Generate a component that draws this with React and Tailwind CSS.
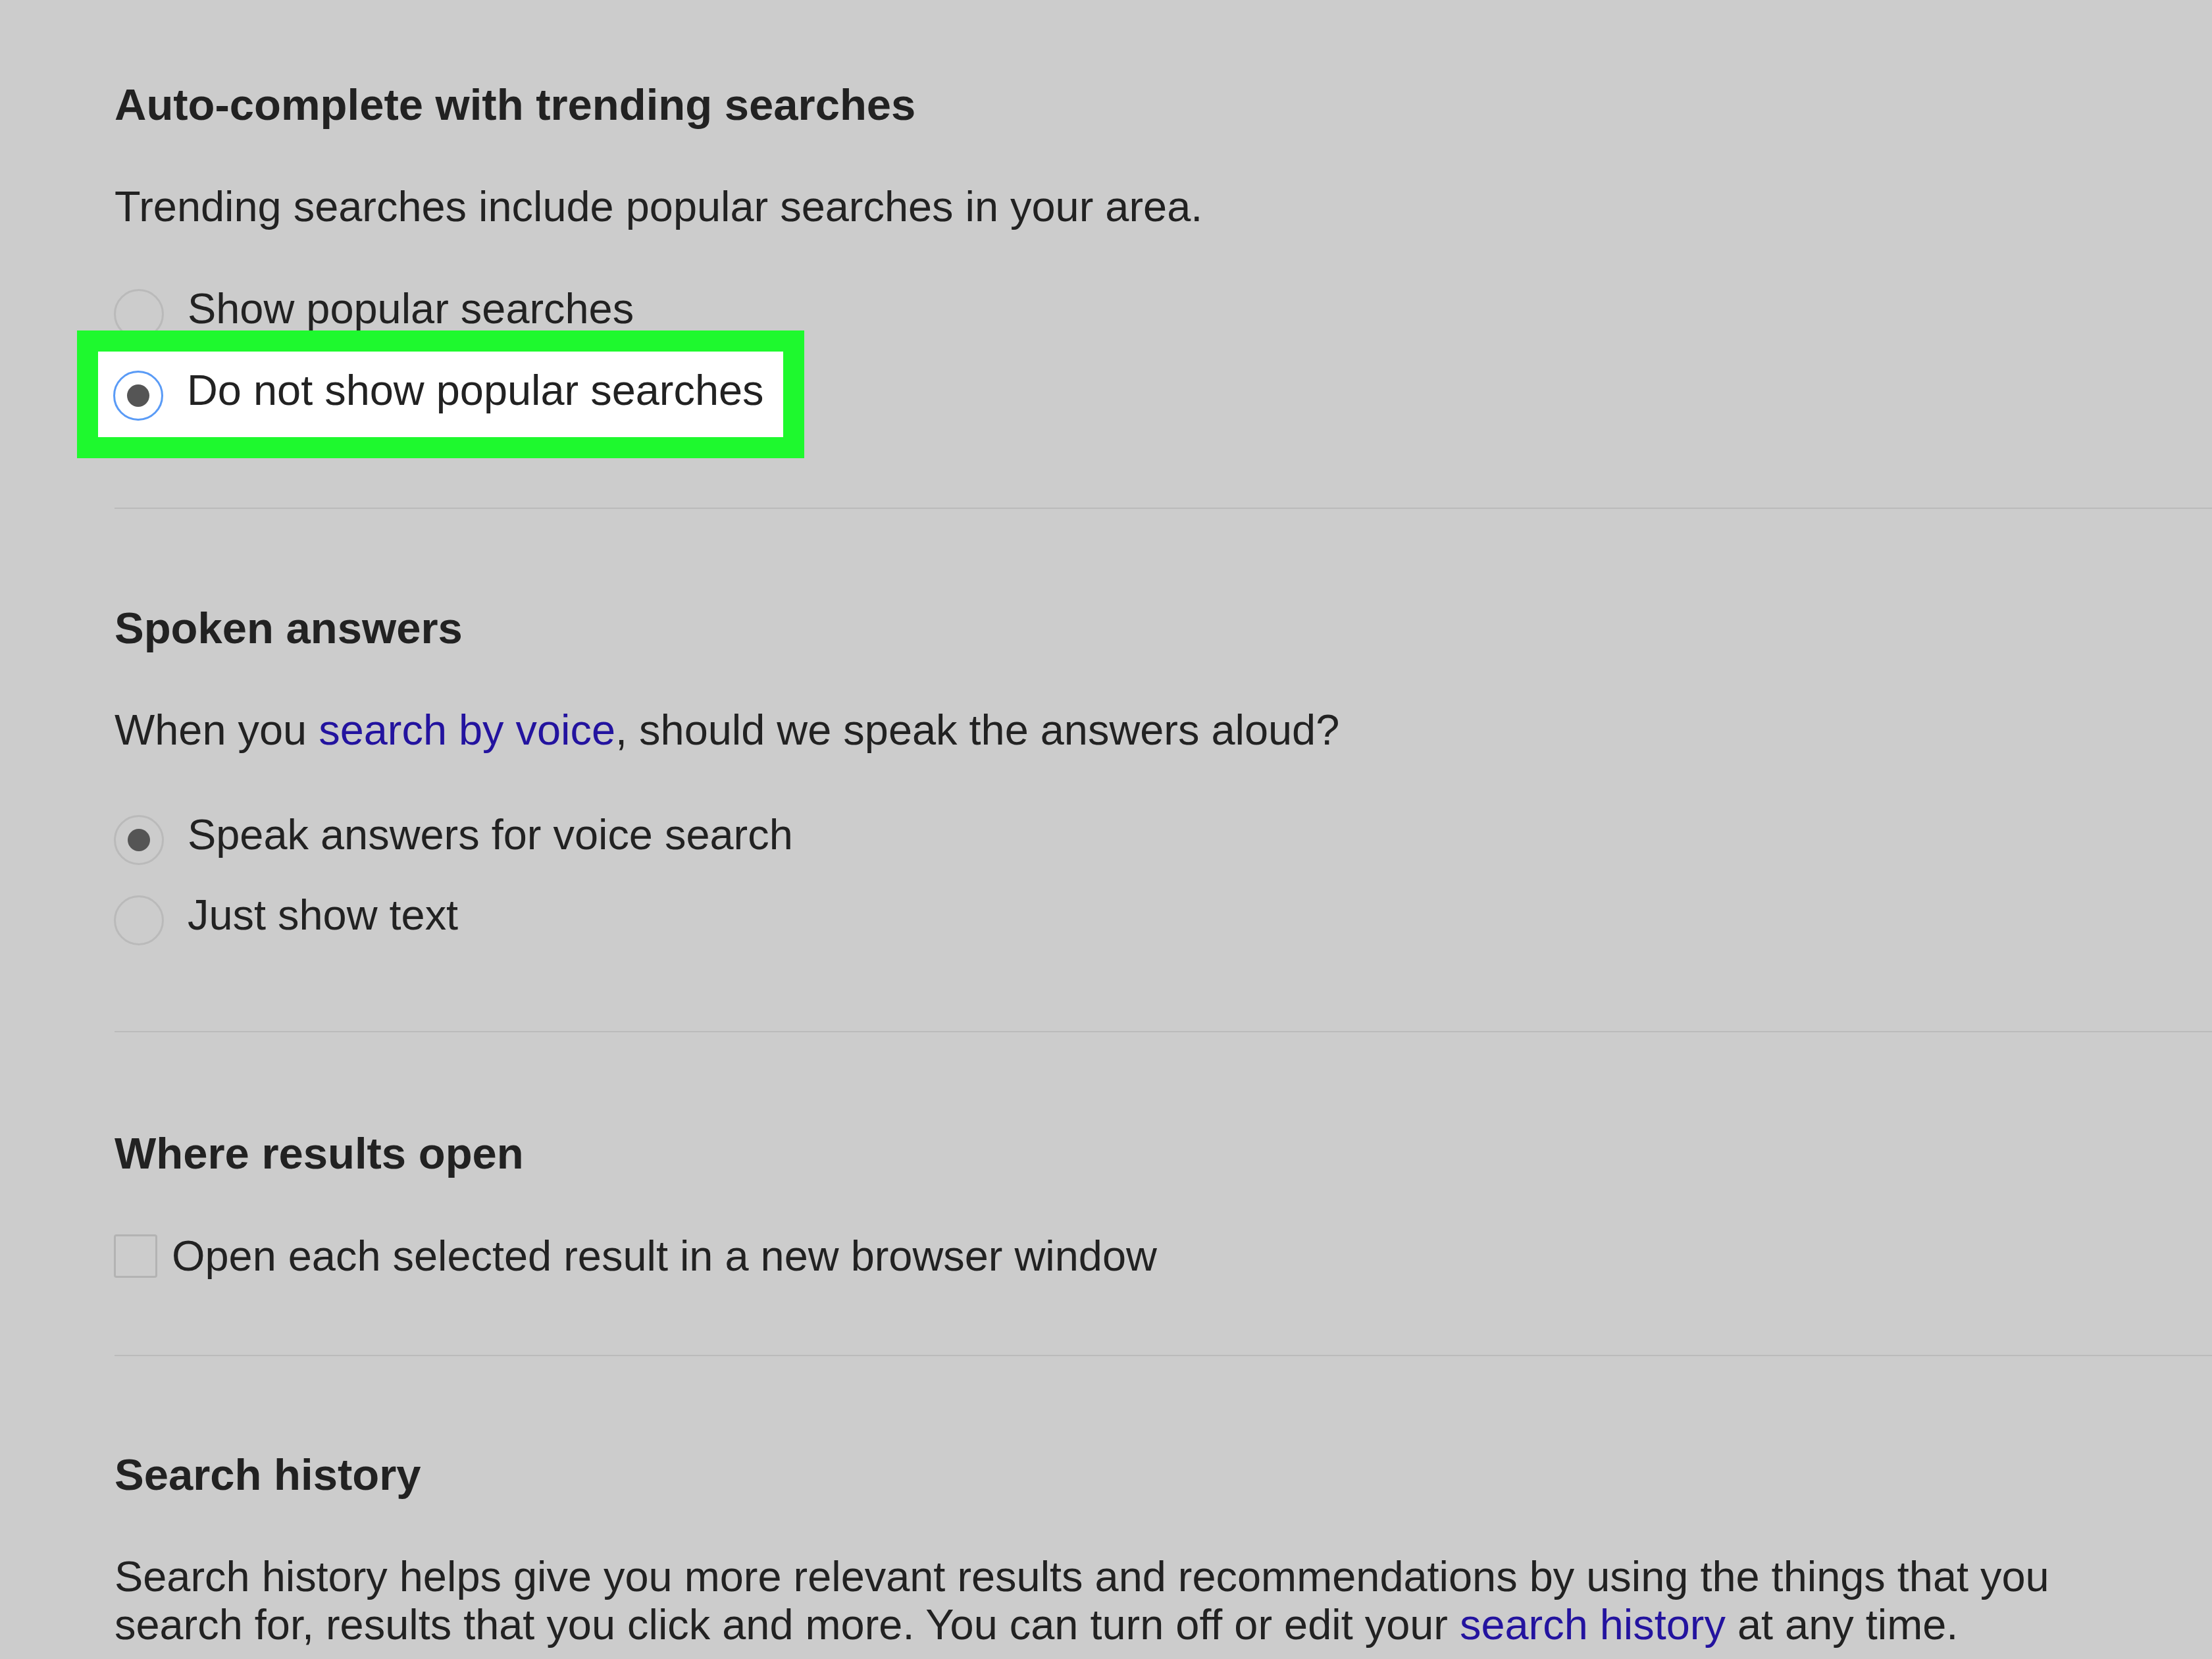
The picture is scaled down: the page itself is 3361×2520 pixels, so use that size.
const FONT = { fontFamily: '"Liberation Sans", Arial, sans-serif' };

function Radio({ checked, focused }) {
  return (
    <div
      className={
        'w-[76px] h-[76px] mt-[10px] -ml-[1px] rounded-full flex items-center justify-center flex-shrink-0 ' +
        (focused ? 'border-[3px] border-[#5a9bf6] bg-white' : 'border-[3px] border-[#bababa]')
      }
    >
      {checked && <div className="w-[34px] h-[34px] rounded-full bg-[#555555]" />}
    </div>
  );
}

function Option({ label, checked, focused }) {
  return (
    <div className="flex items-start h-[80px]">
      <Radio checked={checked} focused={focused} />
      <span className="ml-[36px] text-[64.9px] leading-[80px] text-[#222222] whitespace-nowrap">{label}</span>
    </div>
  );
}

function Heading({ children, className = '' }) {
  return (
    <h2 className={'text-[67px] leading-[80px] font-bold text-[#222222] ' + className}>{children}</h2>
  );
}

function Body({ children, className = '' }) {
  return (
    <p className={'text-[64.9px] leading-[80px] text-[#222222] whitespace-nowrap ' + className}>{children}</p>
  );
}

const Divider = ({ className = '' }) => <div className={'h-[2px] bg-[#bbbbbb] ' + className} />;

export default function App() {
  return (
    <div className="w-[3361px] h-[2520px] overflow-hidden bg-[#cccccc] pl-[174px] pt-[119px]" style={FONT}>
      {/* trending searches */}
      <Heading>Auto-complete with trending searches</Heading>
      <Body className="mt-[75px]">Trending searches include popular searches in your area.</Body>
      <div className="mt-[75px]">
        <Option label="Show popular searches" />
        <div className="relative -mt-[7px] -ml-[57px] w-[1105px] border-[32px] border-[#1ef92e] bg-white pl-[24px] pt-[19px] pb-[31px]">
          <Option label="Do not show popular searches" checked focused />
        </div>
      </div>

      <Divider className="mt-[75px]" />

      {/* spoken answers */}
      <Heading className="mt-[141px]">Spoken answers</Heading>
      <Body className="mt-[75px]">
        When you <a className="text-[#23139f]">search by voice</a>, should we speak the answers aloud?
      </Body>
      <div className="mt-[79px] flex flex-col gap-[42px]">
        <Option label="Speak answers for voice search" checked />
        <Option label="Just show text" />
      </div>

      <Divider className="mt-[136px]" />

      {/* where results open */}
      <Heading className="mt-[144px]">Where results open</Heading>
      <div className="mt-[76px] flex items-start h-[80px]">
        <div className="w-[66px] h-[66px] mt-[7px] -ml-[1px] rounded-[4px] border-[3px] border-[#b3b3b3] flex-shrink-0" />
        <span className="ml-[22px] text-[64.9px] leading-[80px] text-[#222222] whitespace-nowrap">
          Open each selected result in a new browser window
        </span>
      </div>

      <Divider className="mt-[110px]" />

      {/* search history */}
      <Heading className="mt-[140px]">Search history</Heading>
      <p className="mt-[78px] text-[64.9px] leading-[73px] text-[#222222] whitespace-nowrap">
        Search history helps give you more relevant results and recommendations by using the things that you
        <br />
        search for, results that you click and more. You can turn off or edit your{' '}
        <a className="text-[#23139f]">search history</a> at any time.
      </p>
    </div>
  );
}
